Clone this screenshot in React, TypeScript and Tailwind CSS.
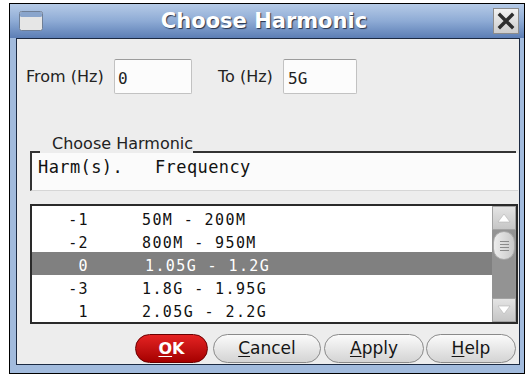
const sans = "font-['DejaVu_Sans',sans-serif]";
const mono = "font-['DejaVu_Sans_Mono',monospace]";

const rows = [
  { h: '-1', f: '50M - 200M' },
  { h: '-2', f: '800M - 950M' },
  { h: '0', f: '1.05G - 1.2G', sel: true },
  { h: '-3', f: '1.8G - 1.95G' },
  { h: '1', f: '2.05G - 2.2G' },
];

const WinIcon = () => (
  <svg width="24" height="20" viewBox="0 0 24 20">
    <rect x="0.5" y="0.5" width="23" height="19" rx="2" fill="#e6e6e6" stroke="#6f7f96" />
    <rect x="1" y="1" width="22" height="5" rx="1.5" fill="#8aa5cc" />
  </svg>
);

const CloseBtn = () => (
  <div className="flex h-[26px] w-[26px] items-center justify-center border border-[#8c8c8c] bg-linear-to-b from-[#f2f2f2] to-[#cdcdcd]">
    <svg width="18" height="18" viewBox="0 0 18 18">
      <path d="M3 3 L15 15 M15 3 L3 15" stroke="#2e2e2e" strokeWidth="3.4" strokeLinecap="square" />
    </svg>
  </div>
);

const Arrow = ({ down }: { down?: boolean }) => (
  <div className="flex h-[24px] items-center justify-center border border-[#a3a3a3] bg-linear-to-b from-[#e4e4e4] to-[#c6c6c6]">
    <svg width="14" height="10" viewBox="0 0 14 10">
      <polygon points={down ? '1,1 13,1 7,9' : '1,9 13,9 7,1'} fill="#ffffff" stroke="#b4b4b4" strokeWidth="0.6" />
    </svg>
  </div>
);

const Button = ({ w, k, rest }: { w: string; k: string; rest: string }) => (
  <button
    className={`${w} flex h-[29px] items-center justify-center rounded-full border border-[#8a8a8a] bg-linear-to-b from-[#fbfbfb] to-[#d4d4d4] text-[17px] text-[#151515] ${sans}`}
  >
    <span className="underline underline-offset-2">{k}</span>
    {rest}
  </button>
);

export default function App() {
  return (
    <div className="h-[379px] w-[532px] bg-white pl-[9px] pt-[3px]">
      <div className="flex h-[371px] w-[516px] flex-col border border-black bg-[#a2bbdd]">
        {/* title bar */}
        <div className="flex h-[34px] items-center bg-linear-to-b from-[#b6cbe7] via-[#8eabd5] to-[#5c7eb5] pl-[9px] pr-[5px]">
          <WinIcon />
          <div
            className={`flex-1 pr-[8px] text-center text-[21px] font-bold leading-[24px] text-white [text-shadow:1px_1px_1px_#27324a] ${sans}`}
          >
            Choose Harmonic
          </div>
          <CloseBtn />
        </div>

        <div className="flex flex-1 pb-[8px] pl-[6px] pr-[4px]">
          <div className="flex flex-1 flex-col border border-[#1c2a42] bg-[#ededed]">
            {/* range inputs */}
            <div className={`ml-[9px] mt-[20px] flex h-[35px] items-center text-[16px] text-[#222] ${sans}`}>
              <span className="w-[88px]">From (Hz)</span>
              <div className={`flex h-[35px] w-[78px] items-center rounded-[2px] border border-[#c2c2c2] border-t-[#9c9c9c] bg-[#fcfcfc] pl-[3px] pt-[4px] text-[16px] ${mono}`}>
                0
              </div>
              <span className="ml-[26px] w-[65px]">To (Hz)</span>
              <div className={`flex h-[35px] w-[74px] items-center rounded-[2px] border border-[#c2c2c2] border-t-[#9c9c9c] bg-[#fcfcfc] pl-[4px] pt-[4px] text-[16px] ${mono}`}>
                5G
              </div>
            </div>

            {/* group header */}
            <div className="ml-[13px] mr-[1px] mt-[40px]">
              <div className="flex h-[19px] items-end">
                <div className="w-[10px] border-t-2 border-[#333]" />
                <span className={`mb-[2px] ml-[12px] self-start text-[16px] leading-[19px] text-[#222] ${sans}`}>Choose Harmonic</span>
                <div className="mr-[2px] flex-1 border-t-2 border-[#333]" />
              </div>
              <div className="h-[38px] border-b border-l-2 border-[#333] border-b-[#d6d6d6] bg-[#fbfbfb] pl-[6px] pt-[4px]">
                <div className={`whitespace-pre text-[17px] leading-[20px] tracking-[0.4px] text-[#111] ${mono}`}>Harm(s).   Frequency</div>
              </div>
            </div>

            {/* list */}
            <div className="ml-[13px] mr-[1px] mt-[13px] flex h-[120px] border-2 border-[#2a2a2a] bg-white">
              <div className="flex-1">
                {rows.map((r) => (
                  <div
                    key={r.h}
                    className={`flex h-[23px] pt-[6px] text-[15px] leading-[17px] tracking-[1.4px] ${mono} ${
                      r.sel ? 'bg-[#808080] text-white' : 'text-[#111]'
                    }`}
                  >
                    <span className="w-[57px] text-right">{r.h}</span>
                    <span className={r.sel ? 'ml-[56px]' : 'ml-[53px]'}>{r.f}</span>
                  </div>
                ))}
              </div>
              <div className="flex w-[24px] flex-col">
                <Arrow />
                <div className="flex-1 bg-[#939393] px-[1px] pt-[1px]">
                  <div className="flex h-[29px] flex-col items-center justify-center gap-[2px] rounded-full border border-[#a9a9a9] bg-linear-to-r from-[#ececec] to-[#c9c9c9]">
                    <div className="h-px w-[9px] bg-[#8a8a8a]" />
                    <div className="h-px w-[9px] bg-[#8a8a8a]" />
                    <div className="h-px w-[9px] bg-[#8a8a8a]" />
                    <div className="h-px w-[9px] bg-[#8a8a8a]" />
                  </div>
                </div>
                <Arrow down />
              </div>
            </div>

            {/* buttons */}
            <div className="mt-[10px] flex justify-end pr-[3px]">
              <button
                className={`flex h-[29px] w-[73px] items-center justify-center rounded-full border border-[#6b0000] bg-linear-to-b from-[#e52222] to-[#a50000] text-[16px] font-bold text-white ${sans}`}
              >
                <span className="underline underline-offset-2">O</span>K
              </button>
              <div className="ml-[5px]">
                <Button w="w-[108px]" k="C" rest="ancel" />
              </div>
              <div className="ml-[3px]">
                <Button w="w-[100px]" k="A" rest="pply" />
              </div>
              <div className="ml-[2px]">
                <Button w="w-[90px]" k="H" rest="elp" />
              </div>
            </div>
          </div>
        </div>
      </div>
    </div>
  );
}
